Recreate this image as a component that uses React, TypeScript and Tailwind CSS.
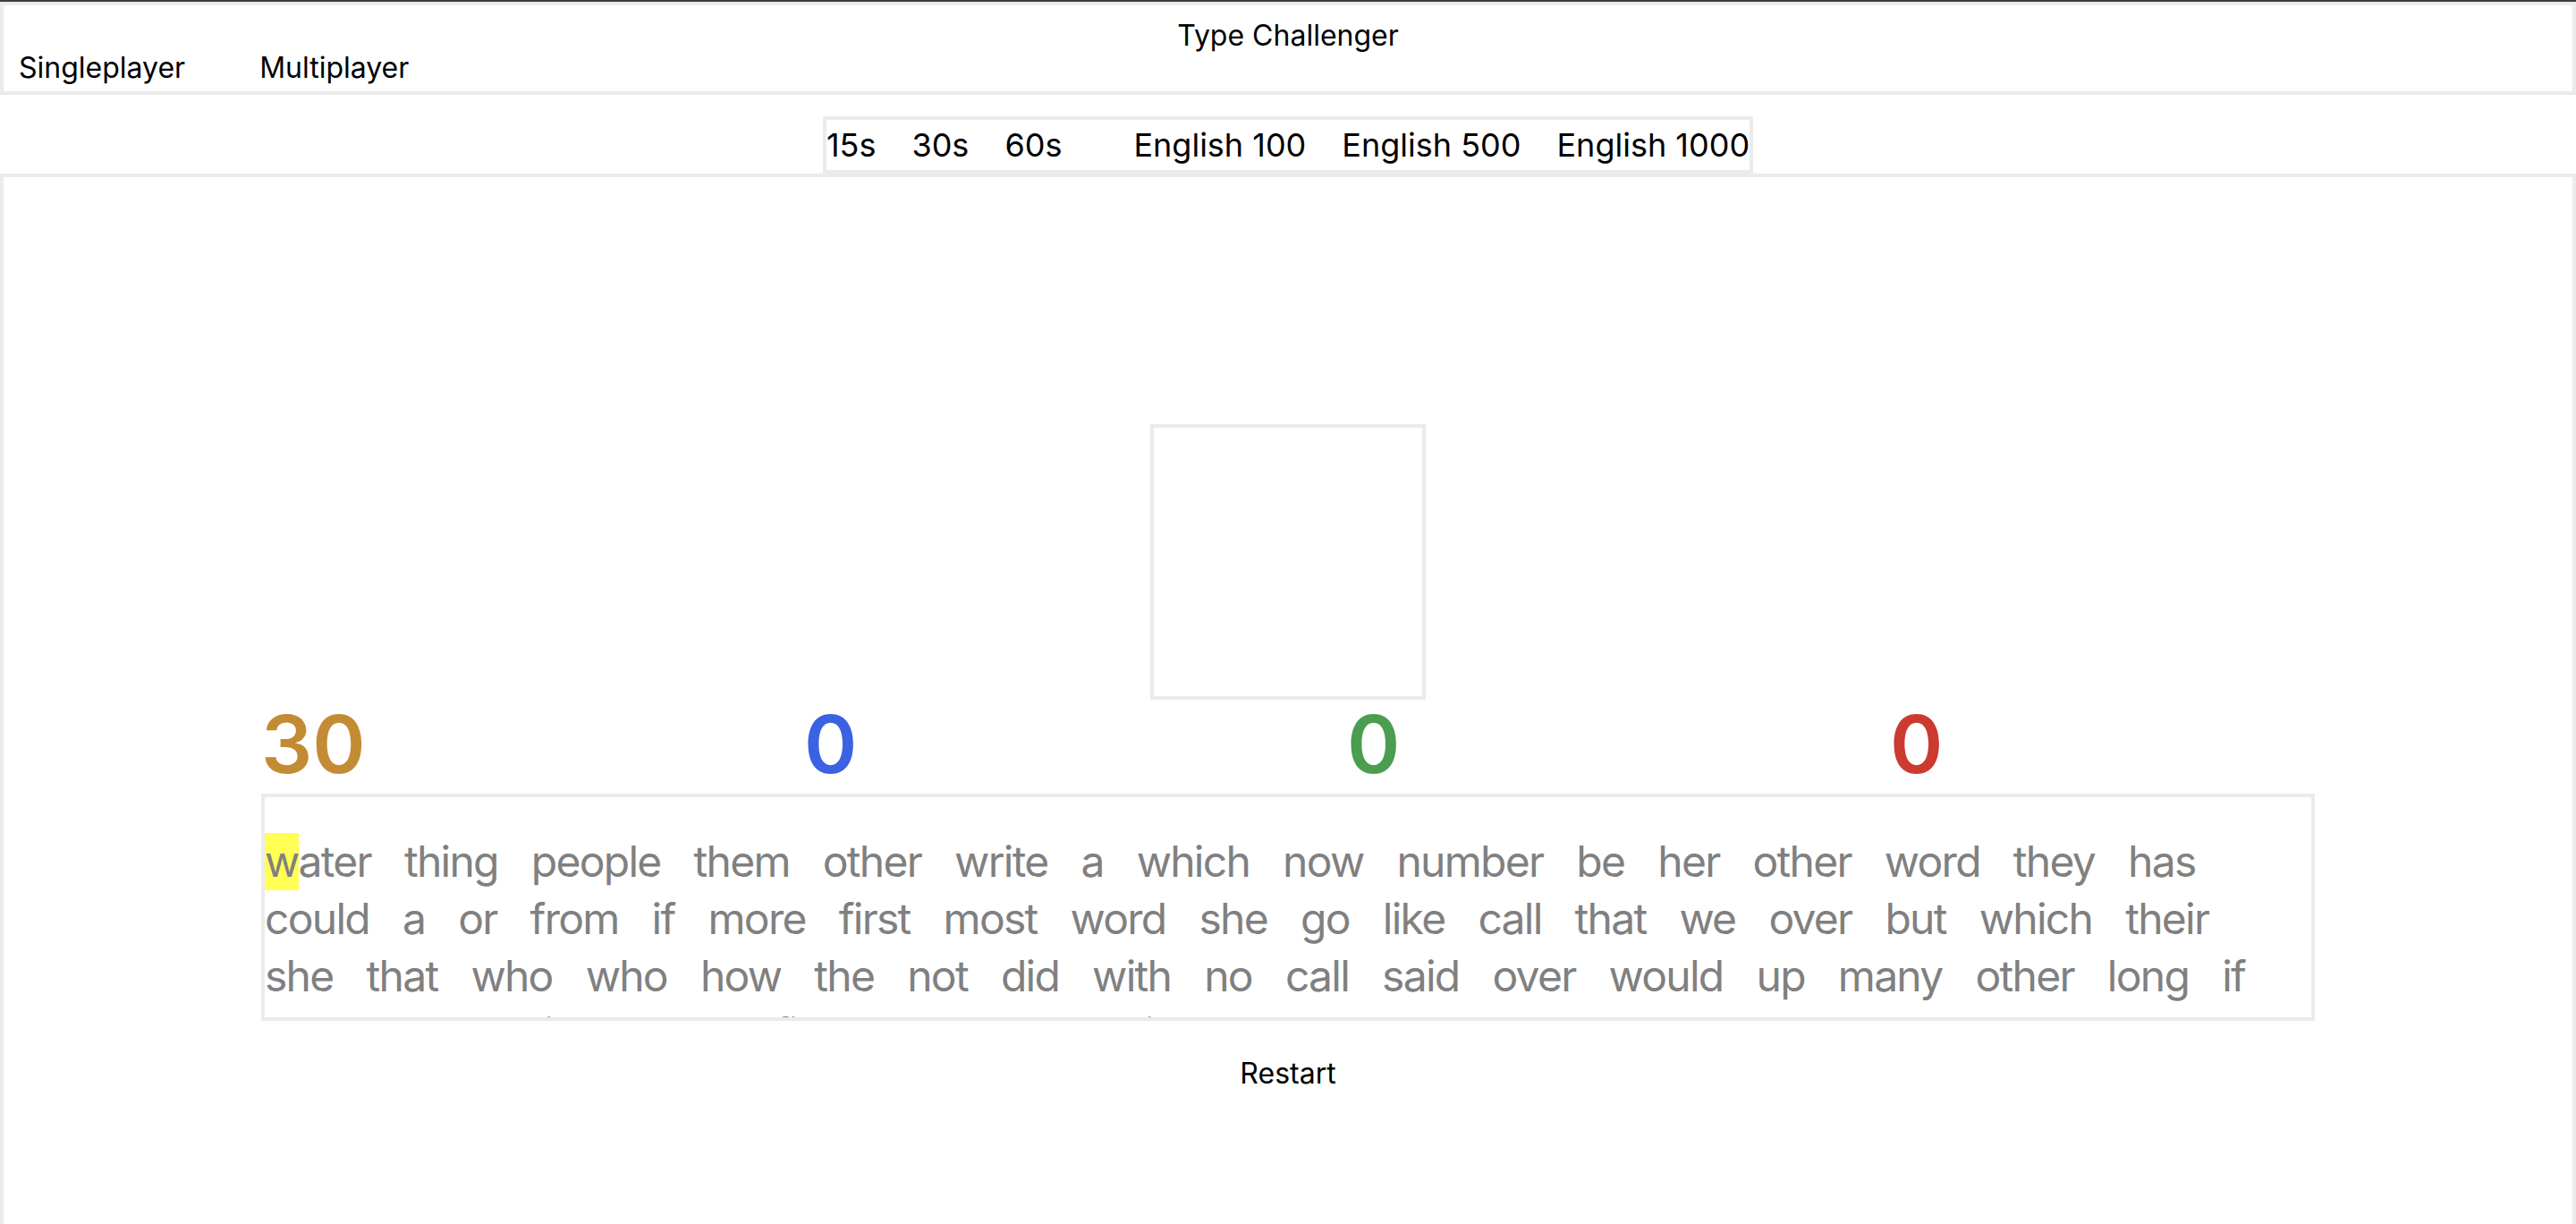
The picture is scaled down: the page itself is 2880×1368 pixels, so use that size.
import React from "react";

const lines = [
  "water thing people them other write a which now number be her other word they has",
  "could a or from if more first most word she go like call that we over but which their",
  "she that who who how the not did with no call said over would up many other long if",
  "there know time been find down day did get come made may part",
];

const stats = [
  { value: "30", color: "text-[#c38b34]" },
  { value: "0", color: "text-[#3a62e2]" },
  { value: "0", color: "text-[#4b9d4f]" },
  { value: "0", color: "text-[#cc3a30]" },
];

const App: React.FC = () => {
  return (
    <div className="w-full h-[1368px] overflow-hidden bg-white text-black font-['Inter','Liberation_Sans',sans-serif]">
      {/* ================= TOP BAR ================= */}
      <div className="h-[2px] bg-[#3d3d3d]" />

      <header className="h-[104px] border-4 border-[#ebebeb] pt-[15px] text-[32px] leading-[38px]">
        <h1 className="text-center">Type Challenger</h1>
        <nav className="flex gap-[83px] pl-[17px] -mt-[2px]">
          <span>Singleplayer</span>
          <span>Multiplayer</span>
        </nav>
      </header>

      {/* ================= MODES ================= */}
      <div className="flex justify-center pt-[24px]">
        <div className="flex items-center gap-[40px] h-[64px] border-4 border-[#ebebeb] text-[36px]">
          <span>15s</span>
          <span>30s</span>
          <span>60s</span>
          <span />
          <span>English 100</span>
          <span>English 500</span>
          <span>English 1000</span>
        </div>
      </div>

      {/* ================= GAME ================= */}
      <main className="h-[1174px] border-4 border-b-0 border-[#ebebeb] pt-[276px]">
        <div className="mx-auto w-[308px] h-[308px] border-4 border-[#ebebeb]" />

        <div className="mx-auto w-[2296px] flex mt-[8px] mb-[13px]">
          {stats.map((s, i) => (
            <div
              key={i}
              className={`w-[607px] shrink-0 text-[90px] leading-[84px] font-semibold ${s.color}`}
            >
              {s.value}
            </div>
          ))}
        </div>

        <div className="mx-auto w-[2296px] h-[254px] overflow-hidden border-4 border-[#ebebeb] pt-[40px]">
          <div className="text-[48px] leading-[64px] text-[#808080] tracking-[-0.036em]">
            {lines.map((line, li) => (
              <div key={li} className="flex gap-[37px] whitespace-nowrap">
                {line.split(" ").map((w, i) =>
                  li === 0 && i === 0 ? (
                    <span key={i}>
                      <span className="inline-block bg-[#ffff55]">{w[0]}</span>
                      {w.slice(1)}
                    </span>
                  ) : (
                    <span key={i}>{w}</span>
                  )
                )}
              </div>
            ))}
          </div>
        </div>

        <div className="mt-[40px] text-center text-[32px] leading-[38px]">
          <button>Restart</button>
        </div>
      </main>
    </div>
  );
};

export default App;
